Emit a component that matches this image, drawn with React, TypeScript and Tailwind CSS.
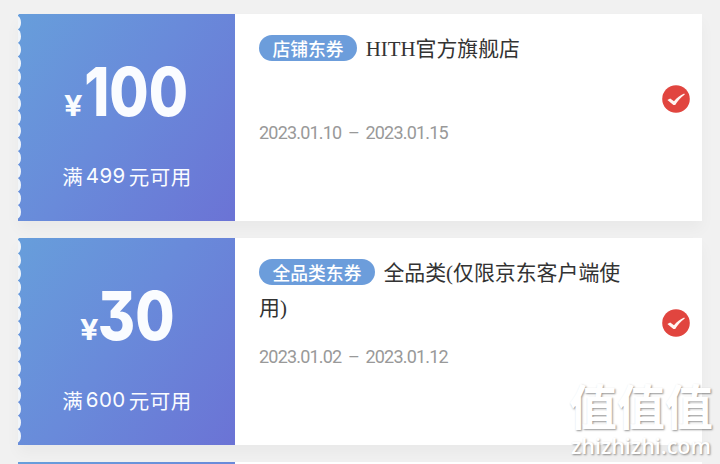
import React from "react";

interface Coupon {
  amount: string;
  limit: string;
  tag: string;
  title: string;
  start: string;
  end: string;
}

const COUPONS: Coupon[] = [
  { amount: "100", limit: "499", tag: "店铺东券", title: "HITH官方旗舰店", start: "2023.01.10", end: "2023.01.15" },
  { amount: "30", limit: "600", tag: "全品类东券", title: "全品类(仅限京东客户端使用)", start: "2023.01.02", end: "2023.01.12" },
];

const NOTCHES = Array.from({ length: 15 }, (_, i) => 8.7 + i * 13.52);

// Perforated left edge of the coupon
const Perforation: React.FC = () => (
  <svg className="absolute left-0 top-0" width="4" height="207" viewBox="0 0 4 207">
    <path d="M0 0H1.2L0 1Z" fill="#f6f8fa" />
    {NOTCHES.map((y) => (
      <ellipse key={y} cx="-1.2" cy={y} rx="4.2" ry="6.9" fill="#f1f5f9" />
    ))}
  </svg>
);

const CheckBadge: React.FC = () => (
  <svg width="28" height="28" viewBox="0 0 28 28">
    <circle cx="14" cy="14" r="13.8" fill="#e1453f" />
    <path
      d="M5.4 15 8.2 13.4 12 16.2C14.8 13 18.2 10.2 22.2 8.6L22.8 9.6C18.8 12.4 15.8 15.9 13.2 19.9H11.4Z"
      fill="#fff5f2"
    />
  </svg>
);

const CouponCard: React.FC<{ coupon: Coupon }> = ({ coupon }) => (
  <div className="flex h-[206.5px] w-[684px] shrink-0 bg-white shadow-[0_8px_14px_rgba(0,0,0,0.035)]">
    <div className="relative flex w-[217px] shrink-0 flex-col items-center bg-linear-[125deg,#679edb_0%,#698ada_48%,#6b73d5_100%] text-[#fafcff]">
      <Perforation />
      <div className="mt-[37px] flex h-[82px] w-full items-baseline justify-center font-['Inter',sans-serif]">
        <span className="inline-block scale-x-[1.12] text-[29px] leading-[82px] font-bold">¥</span>
        <span className="-mr-[9px] -ml-[7px] inline-block scale-x-[0.85] text-[67px] leading-[82px] font-extrabold [font-feature-settings:'cv09']">
          {coupon.amount}
        </span>
      </div>
      <div className="mt-[27px] flex h-[32px] items-center pl-[1px] text-[20.5px] leading-[32px]">
        <span>满</span>
        <span className="mx-[3px] font-['Inter',sans-serif] tracking-[0.5px]">{coupon.limit}</span>
        <span className="tracking-[0.5px]">元可用</span>
      </div>
    </div>
    <div className="flex w-[420px] flex-col pl-6 pt-[18px]">
      <div className="h-[91px] w-[376px] text-[20.9px] leading-[35px] text-[#333] font-['Liberation_Serif','Noto_Sans_CJK_SC',serif]">
        <span className="mr-[8.5px] inline-flex h-[26px] items-center rounded-full bg-[#6c9ddb] px-[13.5px] align-[0px] text-[17.8px] leading-none font-medium text-white font-['Noto_Sans_CJK_SC',sans-serif]">
          <span className="h-[18px] leading-[18px]">{coupon.tag}</span>
        </span>
        {coupon.title}
      </div>
      <div className="flex gap-[6.5px] font-['Roboto',sans-serif] text-[18px] leading-5 tracking-[-0.8px] text-[#999]">
        <span>{coupon.start}</span>
        <span>–</span>
        <span>{coupon.end}</span>
      </div>
    </div>
    <div className="ml-[7px] mt-[71px] size-7">
      <CheckBadge />
    </div>
  </div>
);

export default function App() {
  return (
    <div className="relative h-[464px] w-[720px] overflow-hidden bg-[#f1f1f1] font-['Noto_Sans_CJK_SC',sans-serif]">
      <div className="flex flex-col gap-[17.5px] pl-[18px] pt-[14px]">
        {COUPONS.map((c) => (
          <CouponCard key={c.amount} coupon={c} />
        ))}
        <div className="flex h-4 w-[684px] bg-white">
          <div className="w-[217px] bg-linear-to-r from-[#679edb] to-[#698ada]" />
        </div>
      </div>
      <div className="absolute left-[567px] top-[377px] flex w-[148px] flex-col items-center text-white [text-shadow:1px_1px_2px_rgba(0,0,0,0.42)]">
        <div className="whitespace-nowrap text-[48px] leading-[54px] font-bold">值值值</div>
        <div className="whitespace-nowrap font-['Open_Sans',sans-serif] text-[21.5px] leading-[30px] font-semibold">zhizhizhi.com</div>
      </div>
    </div>
  );
}
